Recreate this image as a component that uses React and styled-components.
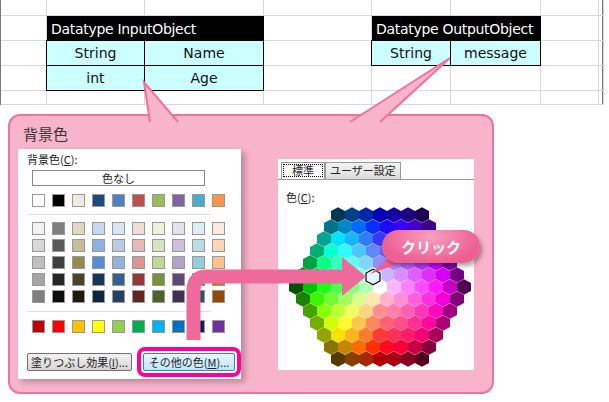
import React from "react";
import styled, { createGlobalStyle } from "styled-components";

const Global = createGlobalStyle`
  html, body { margin: 0; padding: 0; background: #fff; }
  body { width: 609px; height: 402px; overflow: hidden; font-family: "Noto Sans CJK JP", "Noto Sans", sans-serif; }
`;

const Page = styled.div`
  position: relative;
  width: 609px;
  height: 402px;
`;

const Sheet = styled.div`
  display: grid;
  grid-template-columns: 46px 98px 119px 108px 79px 90px 58px 5px;
  grid-template-rows: 16px 25px 25px 25px 14px;
  width: 603px;
  height: 105px;
  border-right: 1px solid #777;
  border-bottom: 1px solid #777;
  border-left: 1px solid #777;
  box-sizing: border-box;
  font-family: "DejaVu Sans", "Noto Sans", sans-serif;
  font-size: 14px;
`;

const GridCell = styled.div`
  grid-column: ${p => p.c};
  grid-row: ${p => p.r};
  border-right: 1px solid #d8d8d8;
  border-bottom: 1px solid #d8d8d8;
`;

const Header = styled.div`
  grid-column: ${p => p.c};
  grid-row: 2;
  background: #000;
  color: #fff;
  display: flex;
  align-items: center;
  padding-left: 4px;
  letter-spacing: -0.3px;
  z-index: 1;
`;

const DataCell = styled.div`
  grid-column: ${p => p.c};
  grid-row: ${p => p.r};
  background: #ccffff;
  color: #111;
  display: flex;
  align-items: center;
  justify-content: center;
  border: 1px solid #000;
  margin: -1px 0 0 -1px;
  z-index: 1;
`;

const Callout = styled.div`
  position: relative;
  margin: 9px 0 0 8px;
  width: 486px;
  height: 280px;
  box-sizing: border-box;
  background: #f8b4cb;
  border: 2px solid #ee7398;
  border-radius: 12px;
  padding: 8px 0 0 8px;
`;

const Title = styled.div`
  font-size: 15px;
  color: #333;
  line-height: 20px;
  margin-left: 5px;
`;

const Panels = styled.div`
  display: flex;
  align-items: flex-start;
  gap: 37px;
  margin-top: 5px;
`;

const LeftPanel = styled.div`
  width: 223px;
  height: 230px;
  background: #fff;
  box-sizing: border-box;
  padding: 3px 0 0 9px;
  font-size: 11px;
  color: #222;
  box-shadow: 4px 3px 6px rgba(0,0,0,0.25);
`;

const Label = styled.div`
  line-height: 14px;
`;

const NoColor = styled.div`
  margin: 4px 0 0 5px;
  width: 173px;
  height: 16px;
  border: 1px solid #888;
  box-sizing: border-box;
  text-align: center;
  line-height: 14px;
`;

const SwatchRow = styled.div`
  display: flex;
  gap: 7px;
  margin: ${p => p.m} 0 0 5px;
`;

const Swatch = styled.div`
  width: 11px;
  height: 11px;
  border: 1px solid #999;
  background: ${p => p.c};
`;

const Sep = styled.div`
  width: 184px;
  height: 1px;
  background: #e0e0e0;
  margin: ${p => p.m} 0 0 0;
`;

const Buttons = styled.div`
  display: flex;
  gap: 11px;
  margin-top: 20px;
`;

const Btn = styled.div`
  height: 18px;
  width: ${p => p.w}px;
  box-sizing: border-box;
  border: 1px solid #707070;
  border-radius: 2px;
  background: ${p => p.hot ? "linear-gradient(#eaf6fd, #bee6fd)" : "linear-gradient(#f2f2f2, #d6d6d6)"};
  border-color: ${p => p.hot ? "#3c7fb1" : "#707070"};
  font-size: 11px;
  line-height: 16px;
  text-align: center;
  white-space: nowrap;
  outline: ${p => p.hot ? "4px solid #ff0099" : "none"};
  outline-offset: 2px;
`;

const RightPanel = styled.div`
  margin-top: 10px;
  width: 196px;
  height: 211px;
  background: #fff;
  position: relative;
  font-size: 11px;
  color: #222;
`;

const Tabs = styled.div`
  display: flex;
  padding: 3px 0 0 3px;
  border-bottom: 1px solid #999;
`;

const Tab = styled.div`
  height: 17px;
  box-sizing: border-box;
  padding: 0 ${p => p.p}px;
  line-height: 15px;
  border: 1px solid #999;
  border-bottom: none;
  background: ${p => p.active ? "#fff" : "linear-gradient(#f3f3f3, #dcdcdc)"};
  ${p => p.active && "outline: 1px dotted #000; outline-offset: -3px;"}
`;

const ColorLabel = styled.div`
  margin: 9px 0 0 8px;
`;

const Bubble = styled.div`
  position: absolute;
  left: 382px;
  top: 230px;
  width: 98px;
  height: 33px;
  border-radius: 17px;
  background: radial-gradient(ellipse at 50% 20%, #f7a0c0, #ee5f92 70%);
  box-shadow: 2px 3px 4px rgba(0,0,0,0.35);
  color: #fff;
  font-weight: bold;
  font-size: 15px;
  display: flex;
  align-items: center;
  justify-content: center;
  z-index: 4;
`;

const Overlay = styled.svg`
  position: absolute;
  left: 0;
  top: 0;
  z-index: ${p => p.z};
  pointer-events: none;
`;

const row1 = ["#ffffff","#000000","#eeece1","#1f497d","#4f81bd","#c0504d","#9bbb59","#8064a2","#4bacc6","#f79646"];
const shades = [
  ["#f2f2f2","#7f7f7f","#ddd9c3","#c6d9f0","#dbe5f1","#f2dcdb","#ebf1dd","#e5e0ec","#dbeef3","#fdeada"],
  ["#d8d8d8","#595959","#c4bd97","#8db3e2","#b8cce4","#e5b9b7","#d7e3bc","#ccc1d9","#b7dde8","#fbd5b5"],
  ["#bfbfbf","#3f3f3f","#938953","#548dd4","#95b3d7","#d99694","#c3d69b","#b2a2c7","#92cddc","#fac08f"],
  ["#a5a5a5","#262626","#494429","#17365d","#366092","#953734","#76923c","#5f497a","#31859b","#e36c09"],
  ["#7f7f7f","#0c0c0c","#1d1b10","#0f243e","#244061","#632423","#4f6128","#3f3151","#205867","#974806"],
];
const std = ["#c00000","#ff0000","#ffc000","#ffff00","#92d050","#00b050","#00b0f0","#0070c0","#002060","#7030a0"];

function hsl2rgb(h, s, l) {
  const a = s * Math.min(l, 1 - l);
  const f = n => { const k = (n + h / 30) % 12; return l - a * Math.max(-1, Math.min(k - 3, 9 - k, 1)); };
  return `rgb(${Math.round(f(0)*255)},${Math.round(f(8)*255)},${Math.round(f(4)*255)})`;
}

function hexCells() {
  const cells = [];
  const cx = 380, cy = 287, w = 14, h = 12;
  for (let r = -6; r <= 6; r++) {
    const n = 13 - Math.abs(r);
    for (let i = 0; i < n; i++) {
      const x = cx + (i - (n - 1) / 2) * w;
      const y = cy + r * h;
      const dx = x - cx, dy = y - cy;
      const dist = Math.sqrt(dx * dx + dy * dy) / w;
      let th = Math.atan2(dx, -dy) * 180 / Math.PI; if (th < 0) th += 360;
      const hue = th >= 180 ? 240 - (360 - th) * (240 / 180) : 240 + th * (120 / 180);
      let l;
      if (dist < 0.5) l = 1;
      else l = Math.max(0.16, 0.95 - dist * 0.1 - (dist > 4.5 ? (dist - 4.5) * 0.13 : 0));
      cells.push({ x, y, c: hsl2rgb((hue + 360) % 360, 1, l) });
    }
  }
  return cells;
}

const hexPts = (x, y) => {
  const s = 7.8;
  return [[0,-s],[7,-s/2],[7,s/2],[0,s],[-7,s/2],[-7,-s/2]].map(([a,b]) => `${x+a},${y+b}`).join(" ");
};

export default function App() {
  const grid = [];
  for (let r = 1; r <= 5; r++) for (let c = 1; c <= 8; c++) grid.push(<GridCell key={`${r}-${c}`} c={c} r={r} />);
  const cells = hexCells();
  return (
    <Page>
      <Global />
      <Sheet>
        {grid}
        <Header c="2 / 4">Datatype InputObject</Header>
        <DataCell c={2} r={3}>String</DataCell>
        <DataCell c={3} r={3}>Name</DataCell>
        <DataCell c={2} r={4}>int</DataCell>
        <DataCell c={3} r={4}>Age</DataCell>
        <Header c="5 / 7">Datatype OutputObject</Header>
        <DataCell c={5} r={3}>String</DataCell>
        <DataCell c={6} r={3}>message</DataCell>
      </Sheet>
      <Callout>
        <Title>背景色</Title>
        <Panels>
          <LeftPanel>
            <Label>背景色(<u>C</u>):</Label>
            <NoColor>色なし</NoColor>
            <SwatchRow m="8px">{row1.map((c, i) => <Swatch key={i} c={c} />)}</SwatchRow>
            <Sep m="7px" />
            <SwatchRow m="7px">{shades[0].map((c, i) => <Swatch key={i} c={c} />)}</SwatchRow>
            {shades.slice(1).map((row, j) => (
              <SwatchRow key={j} m="4px">{row.map((c, i) => <Swatch key={i} c={c} />)}</SwatchRow>
            ))}
            <Sep m="8px" />
            <SwatchRow m="8px">{std.map((c, i) => <Swatch key={i} c={c} />)}</SwatchRow>
            <Buttons>
              <Btn w={105}>塗りつぶし効果(<u>I</u>)...</Btn>
              <Btn w={92} hot>その他の色(<u>M</u>)...</Btn>
            </Buttons>
          </LeftPanel>
          <RightPanel>
            <Tabs>
              <Tab active p={10}>標準</Tab>
              <Tab p={4}>ユーザー設定</Tab>
            </Tabs>
            <ColorLabel>色(<u>C</u>):</ColorLabel>
          </RightPanel>
        </Panels>
      </Callout>
      <Overlay width="609" height="402" z={3}>
        <polygon points="144,82 150,123 178,123" fill="#f8b4cb" />
        <polyline points="150,122 144,82 178,122" fill="none" stroke="#ee7398" strokeWidth="2" />
        <polygon points="450,58 350,123 380,123" fill="#f8b4cb" />
        <polyline points="350,122 450,58 380,122" fill="none" stroke="#ee7398" strokeWidth="2" />
        {cells.map((c, i) => <polygon key={i} points={hexPts(c.x, c.y)} fill={c.c} />)}
        <polygon points={hexPts(373, 277)} fill="#dff6ff" stroke="#fff" strokeWidth="3" />
        <polygon points={hexPts(373, 277)} fill="#dff6ff" stroke="#000" strokeWidth="1.2" />
        <path d="M193.5 340 V290 Q193.5 276.5 207 276.5 H344" fill="none" stroke="#ee6a9a" strokeWidth="14" />
        <polygon points="342,257 366,276.5 342,296" fill="#ee6a9a" />
        <polygon points="392,255 414,258 370,274" fill="#ee5f92" />
      </Overlay>
      <Bubble>クリック</Bubble>
    </Page>
  );
}
